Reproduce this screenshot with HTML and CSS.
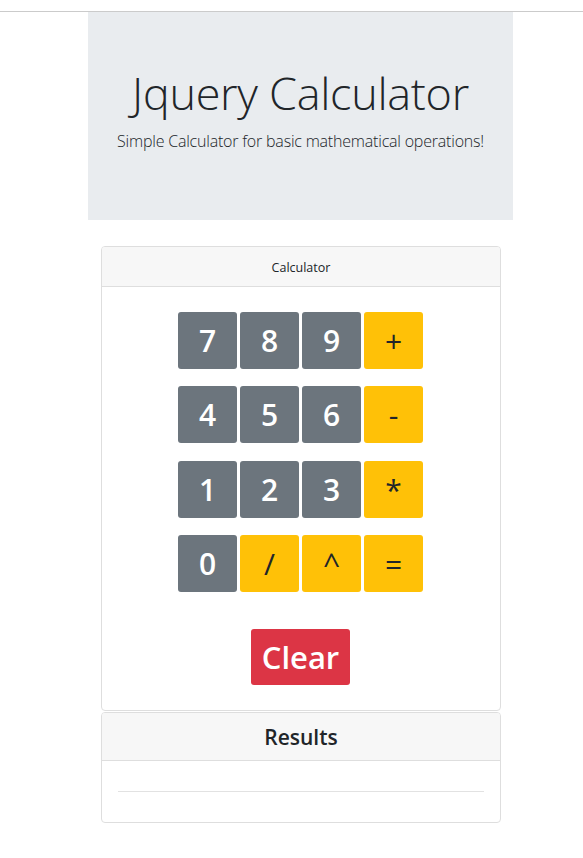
FILE: index.html
```html
<!DOCTYPE html>
<html>
<head>
<meta charset="utf-8">
<link rel="stylesheet" href="styles.css">
</head>
<body>
<div class="topbar"></div>
<div class="container">
  <div class="jumbotron">
    <h1 class="title">Jquery Calculator</h1>
    <p class="lead">Simple Calculator for basic mathematical operations!</p>
  </div>
  <div class="card calc">
    <div class="card-header small-head">Calculator</div>
    <div class="card-body keys">
      <div class="row">
        <button class="btn num">7</button><button class="btn num">8</button><button class="btn num">9</button><button class="btn op">+</button>
      </div>
      <div class="row">
        <button class="btn num">4</button><button class="btn num">5</button><button class="btn num">6</button><button class="btn op">-</button>
      </div>
      <div class="row">
        <button class="btn num">1</button><button class="btn num">2</button><button class="btn num">3</button><button class="btn op">*</button>
      </div>
      <div class="row">
        <button class="btn num">0</button><button class="btn op">/</button><button class="btn op">^</button><button class="btn op">=</button>
      </div>
      <button class="btn clear">Clear</button>
    </div>
  </div>
  <div class="card results">
    <div class="card-header big-head">Results</div>
    <div class="card-body res-body">
      <hr class="rule">
    </div>
  </div>
</div>
</body>
</html>
```
FILE: styles.css
```css
html, body {
  margin: 0;
  padding: 0;
  background: #fff;
  font-family: "Open Sans", "Noto Sans", sans-serif;
  color: #212529;
}
.topbar {
  height: 11px;
  border-bottom: 1px solid #cbcbcb;
}
.container {
  width: 425px;
  margin-left: 88px;
}
.jumbotron {
  background: #e9ecef;
  height: 208px;
  box-sizing: border-box;
  padding-top: 53px;
  text-align: center;
}
.title {
  margin: 0 0 9px;
  font-weight: 300;
  font-size: 45px;
  line-height: 56px;
  letter-spacing: -0.3px;
}
.lead {
  margin: 0;
  font-weight: 300;
  font-size: 16px;
  line-height: 22px;
  letter-spacing: -0.2px;
}
.card {
  width: 400px;
  margin-left: 13px;
  border: 1px solid #dedede;
  border-radius: 4px;
  box-sizing: border-box;
  overflow: hidden;
}
.calc {
  margin-top: 26px;
}
.card-header {
  background: #f7f7f7;
  border-bottom: 1px solid #dedede;
  text-align: center;
}
.small-head {
  height: 40px;
  box-sizing: border-box;
  font-size: 12.5px;
  line-height: 42px;
}
.keys {
  padding: 25px 0 25px;
  display: flex;
  flex-direction: column;
  align-items: center;
}
.row {
  display: flex;
  gap: 3px;
  margin-bottom: 17.4px;
  margin-right: 1px;
}
.btn {
  border: none;
  border-radius: 3px;
  font-family: "Open Sans", "Noto Sans", sans-serif;
  padding: 0;
  margin: 0;
}
.row .btn {
  width: 59px;
  height: 57px;
  font-size: 30px;
  font-weight: 600;
}
.num {
  background: #6c757d;
  color: #fff;
}
.row .op {
  background: #ffc107;
  color: #212529;
  font-weight: 500;
}
.clear {
  margin-top: 19px;
  margin-right: 1px;
  width: 99px;
  height: 56px;
  background: #dc3545;
  color: #fff;
  font-size: 31px;
  font-weight: 600;
}
.results {
  margin-top: 1px;
}
.big-head {
  height: 48px;
  box-sizing: border-box;
  font-size: 21px;
  font-weight: 600;
  line-height: 48px;
}
.res-body {
  padding: 30px 16px 30px;
}
.rule {
  margin: 0;
  border: 0;
  border-top: 1px solid #e2e2e2;
}
```
